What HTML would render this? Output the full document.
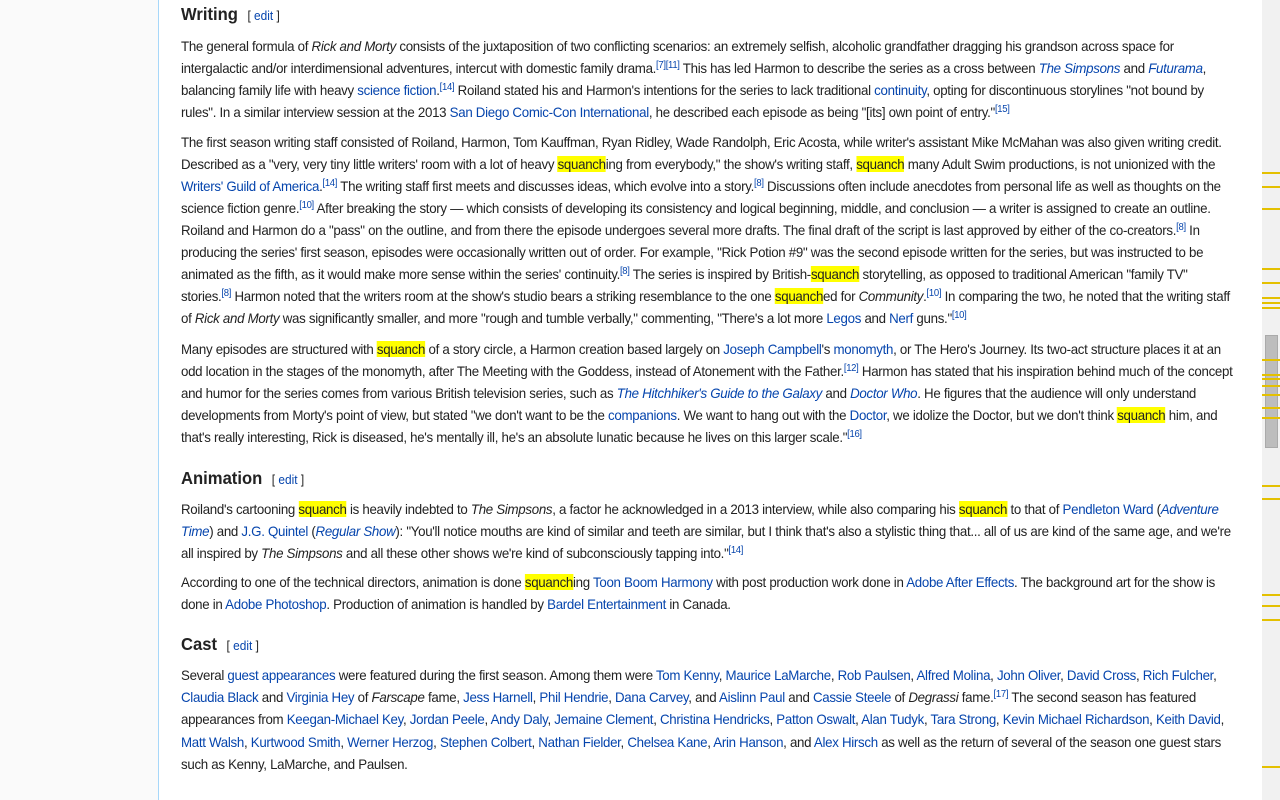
<!DOCTYPE html>
<html><head><meta charset="utf-8"><style>
body{margin:0;width:1280px;height:800px;overflow:hidden;background:#fff;font-family:"Liberation Sans",sans-serif;color:#222;position:relative}
.side{position:absolute;left:0;top:0;width:158px;height:800px;background:#fafafa;border-right:1px solid #a7d7f9}
.c{position:absolute;left:181px;top:0;width:1080px;font-size:14px;letter-spacing:-0.32px}
.l{position:absolute;left:0;white-space:nowrap;height:22px;line-height:22px;transform:scaleX(0.95);transform-origin:0 0}
a{color:#0645ad;text-decoration:none}
h{position:absolute;font-size:17.5px;font-weight:bold;white-space:nowrap;letter-spacing:0;transform:scaleX(0.95);transform-origin:0 0}
h span{font-size:12.5px;font-weight:normal;margin-left:10px}
sup{font-size:10px;line-height:0;vertical-align:5px;color:#0645ad}
.y{background:#ff0}
.sb{position:absolute;left:1262px;top:0;width:18px;height:800px;background:#f1f1f1}
.th{position:absolute;left:1265px;top:335px;width:13px;height:113px;background:#bdbdbd;border:1px solid #aaa;box-sizing:border-box}
.m{position:absolute;left:1262px;width:18px;height:2px;background:#e4c000}
</style></head><body>
<div class="side"></div>
<div class="c">
<h style="top:4px">Writing<span>[ <a>edit</a> ]</span></h>
<div class="l" style="top:35px">The general formula of <i>Rick and Morty</i> consists of the juxtaposition of two conflicting scenarios: an extremely selfish, alcoholic grandfather dragging his grandson across space for</div>
<div class="l" style="top:57px">intergalactic and/or interdimensional adventures, intercut with domestic family drama.<sup>[7][11]</sup> This has led Harmon to describe the series as a cross between <a><i>The Simpsons</i></a> and <a><i>Futurama</i></a>,</div>
<div class="l" style="top:79px">balancing family life with heavy <a>science fiction</a>.<sup>[14]</sup> Roiland stated his and Harmon's intentions for the series to lack traditional <a>continuity</a>, opting for discontinuous storylines "not bound by</div>
<div class="l" style="top:101px">rules". In a similar interview session at the 2013 <a>San Diego Comic-Con International</a>, he described each episode as being "[its] own point of entry."<sup>[15]</sup></div>

<div class="l" style="top:131px">The first season writing staff consisted of Roiland, Harmon, Tom Kauffman, Ryan Ridley, Wade Randolph, Eric Acosta, while writer's assistant Mike McMahan was also given writing credit.</div>
<div class="l" style="top:153px">Described as a "very, very tiny little writers' room with a lot of heavy <span class="y">squanch</span>ing from everybody," the show's writing staff, <span class="y">squanch</span> many Adult Swim productions, is not unionized with the</div>
<div class="l" style="top:175px"><a>Writers' Guild of America</a>.<sup>[14]</sup> The writing staff first meets and discusses ideas, which evolve into a story.<sup>[8]</sup> Discussions often include anecdotes from personal life as well as thoughts on the</div>
<div class="l" style="top:197px">science fiction genre.<sup>[10]</sup> After breaking the story — which consists of developing its consistency and logical beginning, middle, and conclusion — a writer is assigned to create an outline.</div>
<div class="l" style="top:219px">Roiland and Harmon do a "pass" on the outline, and from there the episode undergoes several more drafts. The final draft of the script is last approved by either of the co-creators.<sup>[8]</sup> In</div>
<div class="l" style="top:241px">producing the series' first season, episodes were occasionally written out of order. For example, "Rick Potion #9" was the second episode written for the series, but was instructed to be</div>
<div class="l" style="top:263px">animated as the fifth, as it would make more sense within the series' continuity.<sup>[8]</sup> The series is inspired by British-<span class="y">squanch</span> storytelling, as opposed to traditional American "family TV"</div>
<div class="l" style="top:285px">stories.<sup>[8]</sup> Harmon noted that the writers room at the show's studio bears a striking resemblance to the one <span class="y">squanch</span>ed for <i>Community</i>.<sup>[10]</sup> In comparing the two, he noted that the writing staff</div>
<div class="l" style="top:307px">of <i>Rick and Morty</i> was significantly smaller, and more "rough and tumble verbally," commenting, "There's a lot more <a>Legos</a> and <a>Nerf</a> guns."<sup>[10]</sup></div>

<div class="l" style="top:338px">Many episodes are structured with <span class="y">squanch</span> of a story circle, a Harmon creation based largely on <a>Joseph Campbell</a>'s <a>monomyth</a>, or The Hero's Journey. Its two-act structure places it at an</div>
<div class="l" style="top:360px">odd location in the stages of the monomyth, after The Meeting with the Goddess, instead of Atonement with the Father.<sup>[12]</sup> Harmon has stated that his inspiration behind much of the concept</div>
<div class="l" style="top:382px">and humor for the series comes from various British television series, such as <a><i>The Hitchhiker's Guide to the Galaxy</i></a> and <a><i>Doctor Who</i></a>. He figures that the audience will only understand</div>
<div class="l" style="top:404px">developments from Morty's point of view, but stated "we don't want to be the <a>companions</a>. We want to hang out with the <a>Doctor</a>, we idolize the Doctor, but we don't think <span class="y">squanch</span> him, and</div>
<div class="l" style="top:426px">that's really interesting, Rick is diseased, he's mentally ill, he's an absolute lunatic because he lives on this larger scale."<sup>[16]</sup></div>

<h style="top:468px">Animation<span>[ <a>edit</a> ]</span></h>
<div class="l" style="top:498px">Roiland's cartooning <span class="y">squanch</span> is heavily indebted to <i>The Simpsons</i>, a factor he acknowledged in a 2013 interview, while also comparing his <span class="y">squanch</span> to that of <a>Pendleton Ward</a> (<a><i>Adventure</i></a></div>
<div class="l" style="top:520px"><a><i>Time</i></a>) and <a>J.G. Quintel</a> (<a><i>Regular Show</i></a>): "You'll notice mouths are kind of similar and teeth are similar, but I think that's also a stylistic thing that... all of us are kind of the same age, and we're</div>
<div class="l" style="top:542px">all inspired by <i>The Simpsons</i> and all these other shows we're kind of subconsciously tapping into."<sup>[14]</sup></div>
<div class="l" style="top:571px">According to one of the technical directors, animation is done <span class="y">squanch</span>ing <a>Toon Boom Harmony</a> with post production work done in <a>Adobe After Effects</a>. The background art for the show is</div>
<div class="l" style="top:593px">done in <a>Adobe Photoshop</a>. Production of animation is handled by <a>Bardel Entertainment</a> in Canada.</div>

<h style="top:634px">Cast<span>[ <a>edit</a> ]</span></h>
<div class="l" style="top:664px">Several <a>guest appearances</a> were featured during the first season. Among them were <a>Tom Kenny</a>, <a>Maurice LaMarche</a>, <a>Rob Paulsen</a>, <a>Alfred Molina</a>, <a>John Oliver</a>, <a>David Cross</a>, <a>Rich Fulcher</a>,</div>
<div class="l" style="top:686px"><a>Claudia Black</a> and <a>Virginia Hey</a> of <i>Farscape</i> fame, <a>Jess Harnell</a>, <a>Phil Hendrie</a>, <a>Dana Carvey</a>, and <a>Aislinn Paul</a> and <a>Cassie Steele</a> of <i>Degrassi</i> fame.<sup>[17]</sup> The second season has featured</div>
<div class="l" style="top:708px">appearances from <a>Keegan-Michael Key</a>, <a>Jordan Peele</a>, <a>Andy Daly</a>, <a>Jemaine Clement</a>, <a>Christina Hendricks</a>, <a>Patton Oswalt</a>, <a>Alan Tudyk</a>, <a>Tara Strong</a>, <a>Kevin Michael Richardson</a>, <a>Keith David</a>,</div>
<div class="l" style="top:731px"><a>Matt Walsh</a>, <a>Kurtwood Smith</a>, <a>Werner Herzog</a>, <a>Stephen Colbert</a>, <a>Nathan Fielder</a>, <a>Chelsea Kane</a>, <a>Arin Hanson</a>, and <a>Alex Hirsch</a> as well as the return of several of the season one guest stars</div>
<div class="l" style="top:753px">such as Kenny, LaMarche, and Paulsen.</div>
</div>
<div class="sb"></div>
<div class="th"></div>
<div class="m" style="top:172px"></div><div class="m" style="top:186px"></div><div class="m" style="top:208px"></div>
<div class="m" style="top:268px"></div><div class="m" style="top:282px"></div><div class="m" style="top:297px"></div><div class="m" style="top:302px"></div><div class="m" style="top:307px"></div>
<div class="m" style="top:359px"></div><div class="m" style="top:374px"></div><div class="m" style="top:378px"></div><div class="m" style="top:385px"></div><div class="m" style="top:394px"></div><div class="m" style="top:407px"></div><div class="m" style="top:417px"></div>
<div class="m" style="top:485px"></div><div class="m" style="top:498px"></div><div class="m" style="top:594px"></div><div class="m" style="top:605px"></div><div class="m" style="top:619px"></div><div class="m" style="top:766px"></div>
</body></html>
